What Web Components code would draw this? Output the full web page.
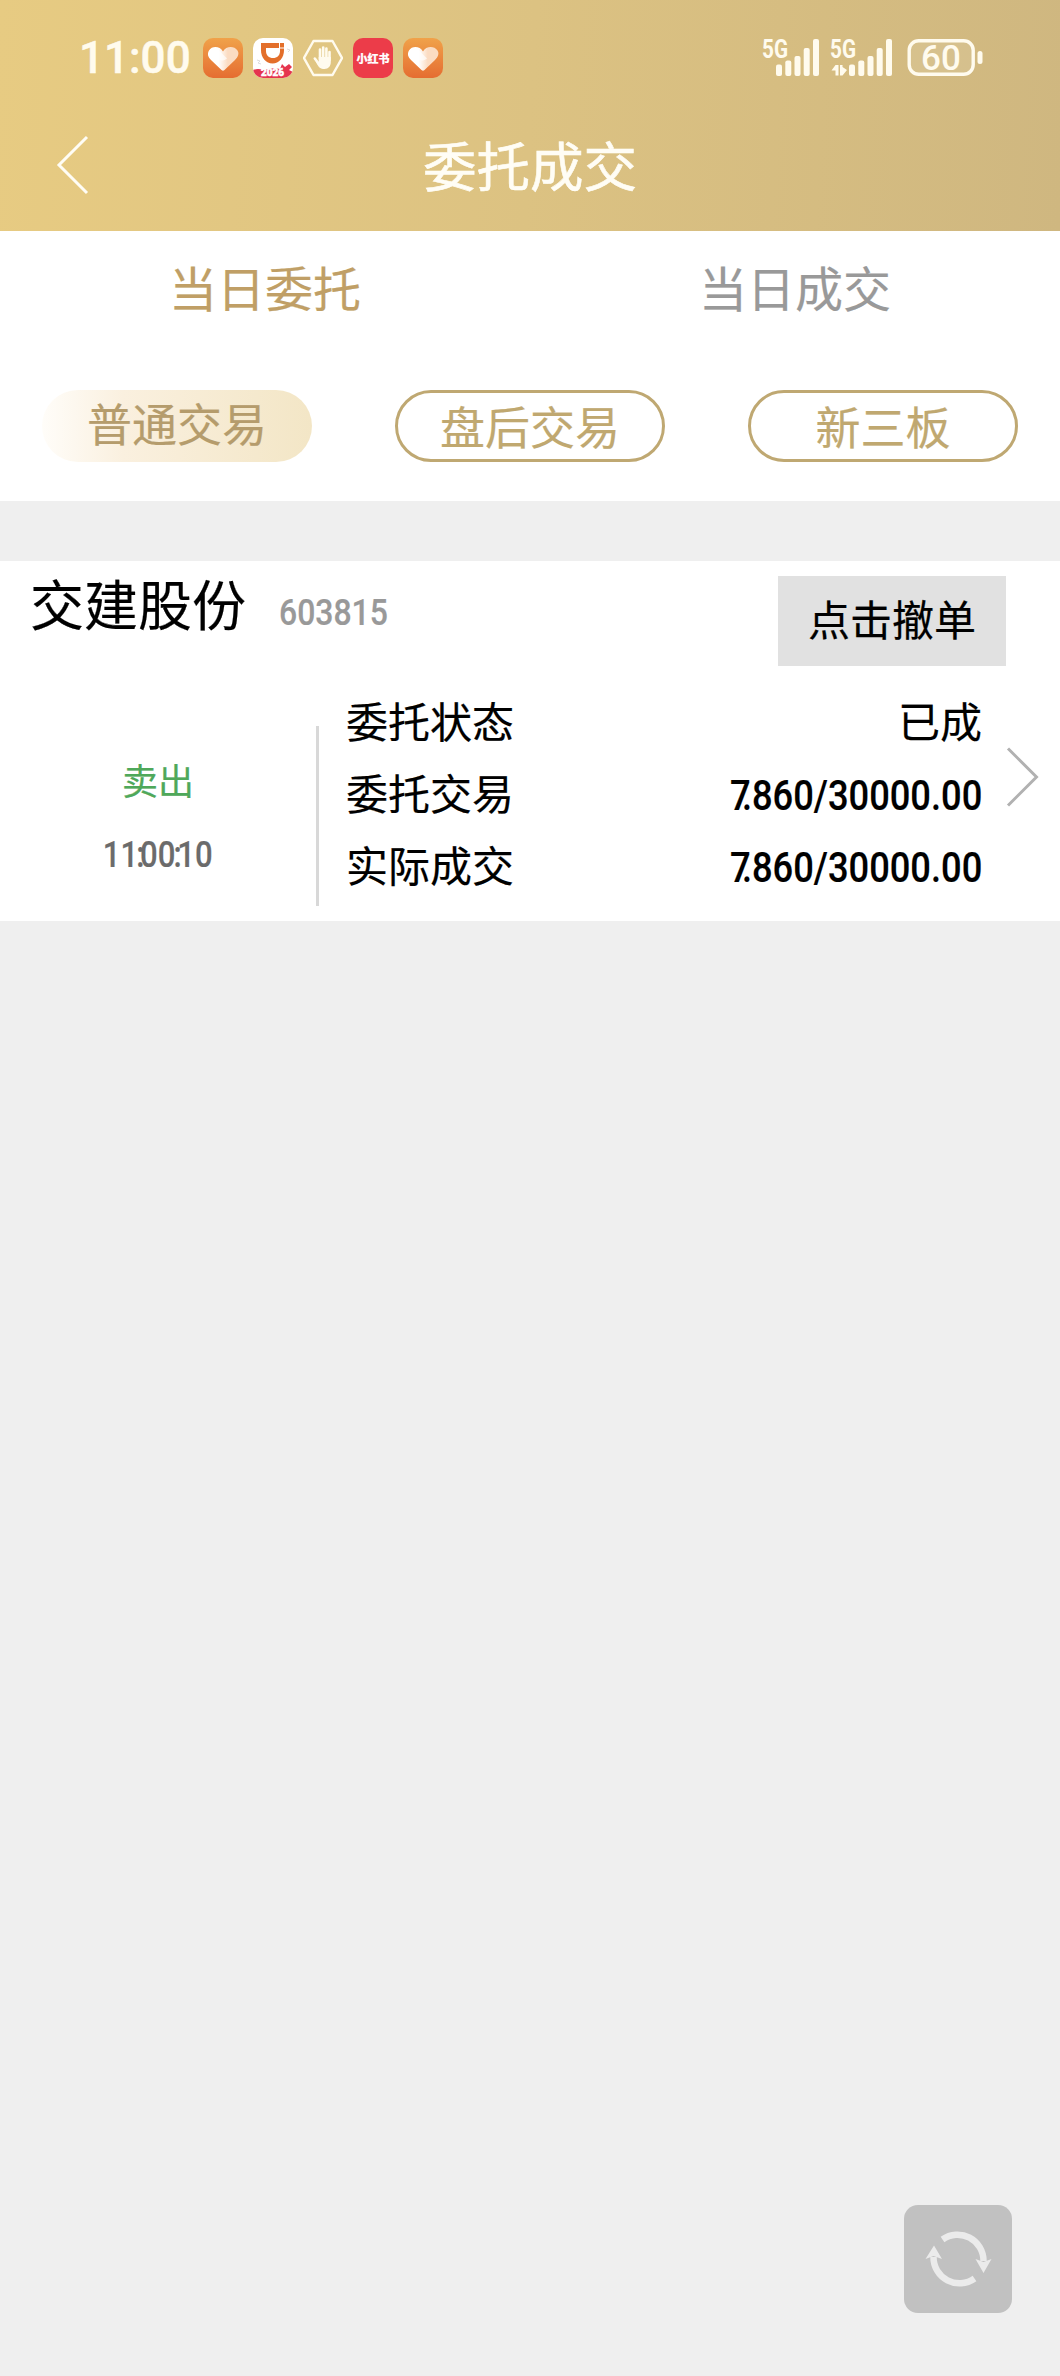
<!DOCTYPE html>
<html lang="zh-CN">
<head>
<meta charset="utf-8">
<meta name="viewport" content="width=device-width, initial-scale=1">
<title>委托成交</title>
<style>
  body {
    margin: 0;
    background: #efefef;
    color: #000;
    font-family: "Noto Sans CJK SC", sans-serif;
    -webkit-text-stroke: .2px;
  }
</style>
</head>
<body>
<trade-page></trade-page>

<script>
  class StatusBar extends HTMLElement {
    constructor() {
      super();
      this.attachShadow({mode: 'open'});
    }

    connectedCallback() {
      const heart = id => `
        <svg width="40" height="40" viewBox="0 0 40 40">
          <defs>
            <linearGradient id="bg${id}" x1="0" y1="0" x2="0" y2="1">
              <stop offset="0" stop-color="#f0a24a"/><stop offset="1" stop-color="#e56d31"/>
            </linearGradient>
            <linearGradient id="ht${id}" x1="0" y1="0.3" x2="1" y2="0.3">
              <stop offset="0.35" stop-color="#fff"/><stop offset="0.65" stop-color="#fbdcc2"/>
            </linearGradient>
          </defs>
          <rect width="40" height="40" rx="10" fill="url(#bg${id})"/>
          <path d="M20 13.500C17 8 9 7.500 6 12.500C4 16 5 19 8 22L18.500 32Q20 33.500 21.500 32L32 22C35 19 36.500 15.500 34.500 12.500C31 7.500 23 8 20 13.500Z" fill="url(#ht${id})"/>
          <path d="M9 12Q13 10 17 13.500L24 20.500Q20 24 16 21.500Z" fill="#fff" opacity=".7"/>
        </svg>`;
      const bars = `
        <rect x="0" y="25.500" width="6" height="11.500" rx="2"/>
        <rect x="9.300" y="21.500" width="6" height="15.500" rx="2"/>
        <rect x="18.500" y="17" width="6" height="20" rx="2"/>
        <rect x="27.700" y="9" width="6" height="28" rx="2"/>
        <rect x="37" y="0" width="6" height="37" rx="2"/>`;
      this.shadowRoot.innerHTML = `
        <style>
          :host {
            display: flex;
            align-items: center;
            height: 116px;
            padding: 0 66px 0 79px;
            box-sizing: border-box;
            color: #fffbee;
            fill: #fffbee;
            font-family: Roboto, sans-serif;
          }
          .clock {
            width: 114px;
            margin-right: 10px;
            font-size: 44px;
            font-weight: 500;
            white-space: nowrap;
            -webkit-text-stroke: .5px;
          }
          .apps { display: flex; gap: 10px; }
          .red {
            width: 40px;
            height: 40px;
            border-radius: 10px;
            background: #ec3c49;
            color: #fff;
            font: 900 11px/40px "Noto Sans CJK SC", sans-serif;
            text-align: center;
            white-space: nowrap;
          }
          .signals { margin-left: auto; }
          svg { display: block; }
        </style>
        <div class="clock">11:00</div>
        <div class="apps">
          ${heart(1)}
          <svg width="40" height="40" viewBox="0 0 40 40">
            <defs><clipPath id="round"><rect width="40" height="40" rx="10"/></clipPath></defs>
            <g clip-path="url(#round)">
              <rect width="40" height="40" fill="#fff"/>
              <path d="M8 5H31V12C31 20 26 25.500 19.500 25.500S8 20 8 12Z" fill="#e36f2b"/>
              <path d="M13 10H27V13C27 17.500 24 20 20 20S13 17.500 13 13Z" fill="#fff"/>
              <path d="M26.500 5V10H31" fill="none" stroke="#fff" stroke-width="1"/>
              <path d="M4 22l3 1-2 2 3 1M34 11l3 1-2 2" stroke="#ddd" fill="none"/>
              <path d="M0 32Q5 30 10 32Q20 29 27 31L29 26L32 29L36 26L39 29L36 32L40 34V40H0Z" fill="#e5344f"/>
              <text x="8" y="37.500" font-size="10" font-weight="900" fill="#fff" textLength="23" lengthAdjust="spacingAndGlyphs" stroke="#fff" stroke-width=".5">2026</text>
            </g>
          </svg>
          <svg width="40" height="40" viewBox="0 0 40 40">
            <path d="M10.500 3H29.500L39 20L29.500 37H10.500L1 20Z" fill="none" stroke="#fffbee" stroke-width="2.400" stroke-linejoin="round"/>
            <g fill="none" stroke="#fffbee" stroke-width="2.600" stroke-linecap="round">
              <path d="M17 21V11.500M20.200 21V9.500M23.400 21V10.500M26.500 22V14M11.800 20.500L16 26"/>
            </g>
            <path d="M15.700 19H27.800V24C27.800 28 25.500 31 21.500 31C17.500 31 15.500 29 14 26L12 22L15.700 24Z"/>
          </svg>
          <div class="red">小红书</div>
          ${heart(2)}
        </div>
        <svg class="signals" width="232" height="62" viewBox="0 -12 232 62">
          <g font-size="25.500" font-weight="700">
            <text x="0" y="18.500" textLength="26" lengthAdjust="spacingAndGlyphs">5G</text>
            <text x="68" y="18.500" textLength="26" lengthAdjust="spacingAndGlyphs">5G</text>
          </g>
          <g transform="translate(14 0)">${bars}</g>
          <g transform="translate(87 0)">${bars}</g>
          <path d="M73.500 26V36.500H76.500V26ZM73.500 26L69.500 31.500H74ZM78 26V36.500H80.500L85 31L80.500 28V26Z"/>
          <rect x="147.200" y="1.700" width="64" height="33.600" rx="9.500" fill="#fff" fill-opacity=".1" stroke="#fffbee" stroke-width="3.400"/>
          <rect x="215.500" y="12" width="5" height="13" rx="2.500"/>
          <text x="159" y="31" font-size="35" font-weight="500" textLength="40">60</text>
        </svg>
      `;
    }
  }
  customElements.define('status-bar', StatusBar);

  class NavHeader extends HTMLElement {
    constructor() {
      super();
      this.attachShadow({mode: 'open'}).innerHTML = `
        <style>
          :host {
            display: grid;
            grid-template-columns: 120px 1fr 120px;
            align-items: center;
            height: 98px;
            color: #fffdf5;
            font-size: 53.500px;
            line-height: 60px;
            text-align: center;
            -webkit-text-stroke: .6px;
          }
          svg { display: block; margin-left: 56px; }
          div { padding-bottom: 3px; }
        </style>
        <svg width="34" height="60" viewBox="0 0 34 60">
          <path d="M31 2L3 30L31 58" fill="none" stroke="#fffdf5" stroke-width="3"/>
        </svg>
        <div><slot></slot></div>
      `;
    }
  }
  customElements.define('nav-header', NavHeader);

  class TabItem extends HTMLElement {
    constructor() {
      super();
      this.attachShadow({mode: 'open'}).innerHTML = `
        <style>
          :host {
            flex: 1;
            color: #999;
            font-size: 48px;
            line-height: 111px;
            text-align: center;
          }
          :host([active]) { color: #c09f66; }
        </style>
        <slot></slot>
      `;
    }
  }
  customElements.define('tab-item', TabItem);

  class PillButton extends HTMLElement {
    constructor() {
      super();
      this.attachShadow({mode: 'open'}).innerHTML = `
        <style>
          :host {
            display: block;
            box-sizing: border-box;
            width: 270px;
            height: 72px;
            border: 3px solid #bfa872;
            border-radius: 36px;
            color: #c0a870;
            font-size: 45px;
            line-height: 66px;
            text-align: center;
          }
          :host([active]) {
            border: 0;
            color: #b59c6c;
            background: linear-gradient(90deg, #fffdf9, #faf0df 30%, #f3e6c6);
          }
        </style>
        <slot></slot>
      `;
    }
  }
  customElements.define('pill-button', PillButton);

  // digits set in a narrow face; "7." and ":" are pulled together
  class DinNumber extends HTMLElement {
    constructor() {
      super();
      this.attachShadow({mode: 'open'});
    }

    connectedCallback() {
      const text = this.getAttribute('value')
        .replace('7.', '<i class="seven">7</i>.')
        .replace(/:/g, '<i class="colon">:</i>');
      this.shadowRoot.innerHTML = `
        <style>
          :host {
            display: inline-block;
            font-family: Roboto, sans-serif;
            font-weight: 500;
            font-kerning: none;
            white-space: nowrap;
            transform: scaleX(.863);
            transform-origin: var(--origin, center);
          }
          i { font-style: normal; }
          .seven { letter-spacing: -.24em; }
          .colon { margin: 0 -.14em 0 -.06em; }
        </style>${text}`;
    }
  }
  customElements.define('din-number', DinNumber);

  class OrderCard extends HTMLElement {
    constructor() {
      super();
      this.attachShadow({mode: 'open'});
    }

    set order(order) {
      this._order = order;
      this.render();
    }

    render() {
      const o = this._order;
      this.shadowRoot.innerHTML = `
        <style>
          :host {
            display: block;
            height: 360px;
            background: #fff;
          }
          .head {
            display: flex;
            height: 129px;
            padding: 0 54px 0 30px;
          }
          .name { font-size: 54px; line-height: 83px; }
          .code {
            --origin: left;
            margin: 31px 0 0 33px;
            color: #999;
            font-size: 37px;
            line-height: 42px;
          }
          .cancel {
            width: 228px;
            height: 90px;
            margin: 15px 0 0 auto;
            background: #e1e1e1;
            font-size: 42px;
            line-height: 84px;
            text-align: center;
          }
          .body {
            display: grid;
            grid-template-columns: 316px 3px 1fr 78px;
            height: 216px;
          }
          .side {
            padding-top: 53px;
            color: #6b6b6b;
            font-size: 36px;
            line-height: 72px;
            text-align: center;
          }
          .deal { color: #4fa85a; }
          .side din-number { line-height: 70px; }
          .line {
            height: 180px;
            margin-top: 36px;
            background: #d8d8d8;
          }
          .rows {
            --origin: right;
            padding-left: 27px;
            font-size: 42px;
            line-height: 60px;
          }
          .row {
            display: flex;
            justify-content: space-between;
            height: 72px;
          }
          .row din-number { line-height: 67px; }
          svg { display: block; margin: 57px 0 0 23px; }
        </style>
        <div class="head">
          <div class="name">${o.name}</div>
          <din-number class="code" value="${o.code}"></din-number>
          <div class="cancel">点击撤单</div>
        </div>
        <div class="body">
          <div class="side">
            <div class="deal">${o.side}</div>
            <din-number value="${o.time}"></din-number>
          </div>
          <div class="line"></div>
          <div class="rows">
            <div class="row"><span>委托状态</span><span>${o.status}</span></div>
            <div class="row"><span>委托交易</span><din-number value="${o.entrust}"></din-number></div>
            <div class="row"><span>实际成交</span><din-number value="${o.actual}"></din-number></div>
          </div>
          <svg width="36" height="60" viewBox="0 0 36 60">
            <path d="M3 1.500L31.500 30L3 58.500" fill="none" stroke="#b1b1b1" stroke-width="3"/>
          </svg>
        </div>
      `;
    }
  }
  customElements.define('order-card', OrderCard);

  class RefreshButton extends HTMLElement {
    constructor() {
      super();
      this.attachShadow({mode: 'open'}).innerHTML = `
        <style>
          :host {
            position: fixed;
            right: 48px;
            bottom: 63px;
            width: 108px;
            height: 108px;
            border-radius: 14px;
            background: #c1c1c1;
          }
          svg { display: block; }
        </style>
        <svg width="108" height="108" viewBox="0 0 108 108">
          <g fill="none" stroke="#ebebeb" stroke-width="6.500">
            <path d="M38.500 34.500A26 26 0 0 1 79.500 56"/>
            <path d="M70.500 73.500A26 26 0 0 1 29.500 52"/>
          </g>
          <path d="M71.500 54L79.500 57L87.500 54L79.500 68ZM21.500 54L29.500 51L38 54L30 40.500Z" fill="#ebebeb"/>
        </svg>
      `;
    }
  }
  customElements.define('refresh-button', RefreshButton);

  class TradePage extends HTMLElement {
    constructor() {
      super();
      this.attachShadow({mode: 'open'});
    }

    connectedCallback() {
      this.shadowRoot.innerHTML = `
        <style>
          :host { display: block; min-height: 2376px; }
          header {
            height: 231px;
            background: linear-gradient(93deg, #e7cb82, #dcc282 50%, #cfb780);
          }
          .filters {
            height: 270px;
            margin-bottom: 60px;
            background: #fff;
          }
          .tabs { display: flex; height: 159px; }
          .pills {
            display: flex;
            justify-content: space-between;
            padding: 0 42px;
          }
        </style>
        <header>
          <status-bar></status-bar>
          <nav-header>委托成交</nav-header>
        </header>
        <div class="filters">
          <div class="tabs">
            <tab-item active>当日委托</tab-item>
            <tab-item>当日成交</tab-item>
          </div>
          <div class="pills">
            <pill-button active>普通交易</pill-button>
            <pill-button>盘后交易</pill-button>
            <pill-button>新三板</pill-button>
          </div>
        </div>
        <order-card></order-card>
        <refresh-button></refresh-button>
      `;
      this.shadowRoot.querySelector('order-card').order = {
        name: '交建股份',
        code: '603815',
        side: '卖出',
        time: '11:00:10',
        status: '已成',
        entrust: '7.860/30000.00',
        actual: '7.860/30000.00'
      };
    }
  }
  customElements.define('trade-page', TradePage);
</script>
</body>
</html>
